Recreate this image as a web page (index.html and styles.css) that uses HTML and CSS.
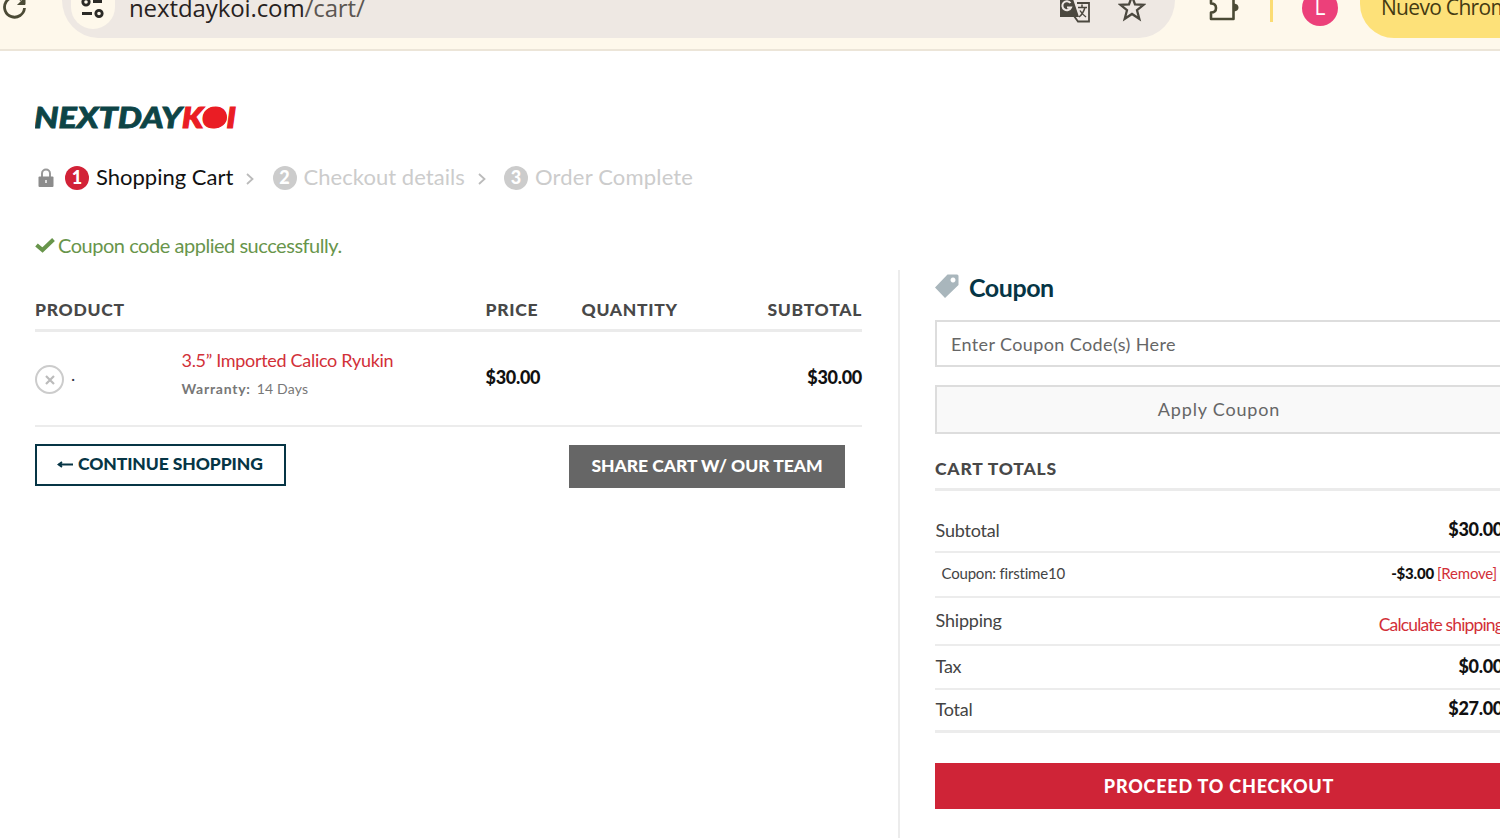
FILE: index.html
```html
<!DOCTYPE html>
<html lang="en">
<head>
<meta charset="utf-8">
<title>Cart – Next Day Koi</title>
<link rel="stylesheet" href="styles.css">
</head>
<body>
<div class="toolbar">
  <svg class="reload" viewBox="0 0 28 22" width="28" height="22" fill="none" stroke="#4b4a35" stroke-width="2.8"><path d="M24.500 8A10 10 0 1 1 21.500 0"/><path d="M25 -3V4.500H17.500" fill="#4b4a35" stroke-width="1"/></svg>
  <div class="omnibox">
    <div class="site-info"><svg viewBox="0 0 24 22" width="24" height="22" fill="none" stroke="#2b2a26" stroke-width="2.800"><circle cx="5" cy="2" r="3.200"/><path d="M12 1.500H21M1 13.500H11"/><circle cx="18" cy="13.500" r="3.200"/></svg></div>
    <span class="url"><span class="host">nextdaykoi.com</span><span class="path">/cart/</span></span>
    <svg class="translate" viewBox="0 0 32 26" width="32" height="26"><path d="M17 3H29V21.500H18L14 16" fill="#eee8e3" stroke="#4b483f" stroke-width="1.800"/><path d="M0 -1H13L19 17H0Z" fill="#4b483f"/><path d="M10.500 3A4.500 4.500 0 1 0 11 7.500H7" fill="none" stroke="#eee8e3" stroke-width="2"/><path d="M18 7.500H27M22 4.500V7.500M25 7.500Q23 14 19 17M20 10.500Q22 14 26 17" fill="none" stroke="#4b483f" stroke-width="1.500"/></svg>
    <svg class="star" viewBox="0 0 28 24" width="28" height="24"><path d="M14 -4L17 4.500L25.500 4.800L19 10.200L21.300 18.800L14 14L6.700 18.800L9 10.200L2.500 4.800L11 4.500Z" fill="none" stroke="#4b483f" stroke-width="2.300"/></svg>
  </div>
  <svg class="puzzle" viewBox="0 0 32 24" width="32" height="24"><path d="M3 -2V3.500Q8 3.500 8 8T3 12.500V19H25.500V-2" fill="none" stroke="#4b4a35" stroke-width="2.600" stroke-linejoin="round"/><path d="M26 3.500Q30.500 4 30.500 7.500T26 11.500Z" fill="#4b4a35"/></svg>
  <span class="divider"></span>
  <span class="avatar">L</span>
  <span class="update">Nuevo Chrome</span>
</div>
<main class="page">
  <section class="cart">
    <svg class="logo" viewBox="0 0 204 26" width="204" height="26" role="img" aria-label="NextDayKoi"><text x="-1" y="23" textLength="148" lengthAdjust="spacingAndGlyphs" fill="#0d4446" stroke="#0d4446" stroke-width="0.800">NEXTDAY</text><text x="147" y="23" textLength="54" lengthAdjust="spacingAndGlyphs" fill="#ea1d24" stroke="#ea1d24" stroke-width="1.200">KOI</text><ellipse cx="180" cy="12.500" rx="12" ry="10.500" fill="#ea1d24"/></svg>
    <nav class="steps">
      <svg class="lock" viewBox="0 0 16 20" width="16" height="20"><path d="M4 9V5.500a4 4 0 0 1 8 0V9" fill="none" stroke="#999" stroke-width="2"/><rect x="0.500" y="8.500" width="15" height="10.500" rx="1" fill="#8c8c8c"/><rect x="7" y="12" width="2" height="3" fill="#ddd"/></svg>
      <span class="num on">1</span><span class="step s1 on">Shopping Cart</span>
      <svg class="chev" viewBox="0 0 8 14" width="8" height="14"><path d="M1 2L6.500 7L1 12"/></svg>
      <span class="num">2</span><span class="step s2">Checkout details</span>
      <svg class="chev" viewBox="0 0 8 14" width="8" height="14"><path d="M1 2L6.500 7L1 12"/></svg>
      <span class="num">3</span><span class="step s3">Order Complete</span>
    </nav>
    <p class="notice"><svg viewBox="0 0 20 16" width="20" height="16"><path d="M1.500 8L7.500 13L18.500 2.500" fill="none" stroke="#68954b" stroke-width="4"/></svg><span class="notice-text">Coupon code applied successfully.</span></p>
    <div class="head">
      <span class="c1">PRODUCT</span><span class="c2">PRICE</span><span class="c3">QUANTITY</span><span class="c4">SUBTOTAL</span>
    </div>
    <div class="item">
      <div class="remove-cell"><span class="remove"><svg viewBox="0 0 10 10" width="10" height="10"><path d="M1 1L9 9M9 1L1 9" stroke="#bbb" stroke-width="2.200"/></svg></span><span class="dot">.</span></div>
      <div class="name"><a class="prod">3.5” Imported Calico Ryukin</a><span class="warranty"><b class="w1">Warranty:</b><span class="w2">14 Days</span></span></div>
      <b class="price">$30.00</b>
      <b class="price last">$30.00</b>
    </div>
    <div class="actions">
      <a class="continue"><svg viewBox="0 0 16 10" width="16" height="10"><path d="M1 5.500H16M5 3L1.500 5.500L5 8" fill="none" stroke="#063545" stroke-width="1.800"/></svg><span>CONTINUE SHOPPING</span></a>
      <a class="share">SHARE CART W/ OUR TEAM</a>
    </div>
  </section>
  <aside class="side">
    <h3 class="coupon"><svg viewBox="0 0 24 24" width="24" height="24"><path fill-rule="evenodd" d="M12.500 0.500H22Q23.500 0.500 23.500 2V11L10 24L0 13.500ZM18 3.500a2.500 2.500 0 1 0 .01 0Z" fill="#a9b6bc"/></svg><span>Coupon</span></h3>
    <div class="field">Enter Coupon Code(s) Here</div>
    <div class="apply">Apply Coupon</div>
    <h4 class="totals">CART TOTALS</h4>
    <div class="row r1"><span>Subtotal</span><b class="price">$30.00</b></div>
    <div class="row r2"><span class="code">Coupon: firstime10</span><span class="disc"><b class="minus">-$3.00</b><a class="rm">[Remove]</a></span></div>
    <div class="row r3"><span>Shipping</span><a class="calc">Calculate shipping</a></div>
    <div class="row r4"><span>Tax</span><b class="price">$0.00</b></div>
    <div class="row r5"><span>Total</span><b class="price">$27.00</b></div>
    <a class="checkout">PROCEED TO CHECKOUT</a>
  </aside>
</main>
</body>
</html>
```
FILE: styles.css
```css
* { box-sizing: border-box; }
body { margin: 0; width: 1500px; height: 838px; overflow: hidden; background: #fff; font-family: Lato, "Liberation Sans", sans-serif; color: #444; }
svg { display: block; flex: none; overflow: hidden; }

/* Browser toolbar */
.toolbar { display: flex; align-items: flex-start; width: 1500px; height: 51px; overflow: hidden; background: #fef8eb; border-bottom: 2px solid #ece5d8; font-family: "Open Sans", "Noto Sans", sans-serif; }
.toolbar > * { flex: none; }
.omnibox { display: flex; width: 1113px; height: 38px; margin-left: 34px; background: #eee8e3; border-radius: 0 0 36px 36px / 0 0 38px 38px; }
.site-info { display: flex; justify-content: center; width: 44px; height: 29px; margin-left: 9px; background: #fef8eb; border-radius: 0 0 22px 22px; }
.url { width: 931px; margin: -9px 0 0 14px; font-size: 24px; line-height: 34px; letter-spacing: -0.1px; color: #28221e; white-space: nowrap; }
.path { color: #5c5651; }
.star { margin-left: 26px; }
.puzzle { margin-left: 33px; }
.divider { width: 3px; height: 22px; margin-left: 30px; background: #fbdc73; }
.avatar { width: 36px; height: 36px; margin: -10px 0 0 29px; border-radius: 50%; background: #ec407a; color: #fff; font-size: 21px; line-height: 35px; text-align: center; }
.update { width: 180px; height: 46px; margin: -8px 0 0 22px; padding-left: 21px; background: #fde179; border-radius: 0 0 0 34px; font-size: 21px; line-height: 31px; letter-spacing: -0.7px; color: #443a12; white-space: nowrap; }

/* Cart column */
.page { display: flex; width: 1503px; }
.cart { width: 862px; flex: none; padding: 54px 0 0 35px; }
.logo { font: italic 900 29px Lato, sans-serif; }
.steps { display: flex; align-items: center; height: 30px; margin-top: 32px; padding-left: 3px; font-size: 22px; line-height: 26px; color: #ccc; white-space: nowrap; }
.num { width: 24px; height: 24px; margin-left: 11px; border-radius: 50%; background: #ccc; color: #fff; font-size: 18px; font-weight: 900; line-height: 23px; text-align: center; }
.num.on { background: #d22237; }
.step { margin: -2px 0 0 7px; }
.step.on { color: #111; }
.s1 { width: 138px; }
.s2 { width: 162px; letter-spacing: 0.05px; }
.s3 { letter-spacing: 0.18px; }
.chev { margin: 1px 7.500px 0 12px; fill: none; stroke: #bbb; stroke-width: 1.800; }
.notice { display: flex; align-items: center; gap: 3px; height: 30px; margin: 37px 0 0; font-size: 20px; letter-spacing: -0.47px; color: #68954b; white-space: nowrap; }
.head { display: flex; align-items: flex-end; height: 72px; padding-bottom: 8px; border-bottom: 3px solid #ebebeb; font-size: 17.500px; font-weight: 900; line-height: 22px; letter-spacing: 0.700px; color: #484848; }
.c1 { width: 450.500px; }
.c2 { width: 96px; }
.c3 { width: 160px; }
.c4 { width: 120.500px; text-align: right; }
.item { display: flex; height: 95px; border-bottom: 2px solid #ececec; }
.remove-cell { display: flex; width: 146.500px; padding-top: 33px; }
.remove { display: flex; align-items: center; justify-content: center; width: 29px; height: 29px; border: 2px solid #ccc; border-radius: 50%; }
.dot { margin: -2px 0 0 7px; font-size: 18px; color: #334; }
.name { display: flex; flex-direction: column; width: 304px; padding-top: 16px; white-space: nowrap; }
.prod { font-size: 18px; line-height: 24px; letter-spacing: -0.3px; color: #d23038; }
.warranty { display: flex; gap: 6px; margin-top: 7px; font-size: 14px; line-height: 20px; color: #777; }
.w1 { letter-spacing: 0.750px; }
.w2 { letter-spacing: 0.2px; }
.price { font-size: 18px; font-weight: 900; letter-spacing: -0.3px; color: #111; }
.item .price { width: 96px; padding-top: 33px; line-height: 24px; }
.item .last { width: auto; margin-left: auto; }
.actions { display: flex; justify-content: space-between; margin-top: 17px; padding-right: 17px; font-size: 17.500px; font-weight: 900; letter-spacing: -0.03px; white-space: nowrap; }
.continue { display: flex; align-items: center; gap: 5px; width: 251px; height: 42px; padding: 0 0 3px 20px; border: 2px solid #063545; color: #063545; letter-spacing: -0.1px; }
.share { width: 276px; height: 43px; margin-top: 1px; background: #666; color: #fff; line-height: 41px; text-align: center; }

/* Coupon and totals column */
.side { width: 605px; flex: none; height: 568px; margin: 219px 0 0 36px; padding-left: 35px; border-left: 2px solid #ececec; white-space: nowrap; }
.coupon { display: flex; gap: 10px; height: 46px; margin: 4px 0 0; font-size: 25px; line-height: 26px; letter-spacing: -0.450px; color: #063545; }
.field { height: 47px; padding-left: 14px; border: 2px solid #ddd; font-size: 18px; line-height: 44px; letter-spacing: 0.380px; color: #666; }
.apply { height: 49px; margin-top: 18px; border: 2px solid #ddd; background: #f9f9f9; font-size: 18px; line-height: 44px; letter-spacing: 0.820px; text-align: center; color: #666; }
.totals { height: 57px; margin: 0; padding-top: 24px; border-bottom: 3px solid #ebebeb; font-size: 17.500px; font-weight: 900; line-height: 22px; letter-spacing: 0.820px; color: #484848; }
.row { display: flex; align-items: center; justify-content: space-between; padding-left: 0.500px; border-bottom: 2px solid #ececec; font-size: 18px; letter-spacing: -0.2px; }
.row .price { margin-top: -2px; }
.r1 { height: 62px; padding-top: 18px; }
.r1 .price { margin-top: -3px; }
.r2 { height: 45px; padding-bottom: 4px; }
.r3 { height: 48px; padding-bottom: 2px; }
.r4 { height: 44px; padding-bottom: 3px; }
.r4 .price { margin-top: 0; }
.r5 { height: 43px; padding-bottom: 3px; border-width: 3px; }
.code { margin-left: 6px; font-size: 15px; }
.disc { display: flex; gap: 3px; padding-right: 6px; font-size: 15px; letter-spacing: -0.2px; }
.minus { font-weight: 900; color: #111; }
.rm, .calc { color: #d23038; }
.calc { padding-top: 8px; font-size: 17.500px; letter-spacing: -0.850px; }
.checkout { display: block; height: 46px; margin-top: 30px; background: #cf2437; color: #fff; font-size: 18px; font-weight: 900; line-height: 47px; letter-spacing: 0.800px; text-align: center; }
```
